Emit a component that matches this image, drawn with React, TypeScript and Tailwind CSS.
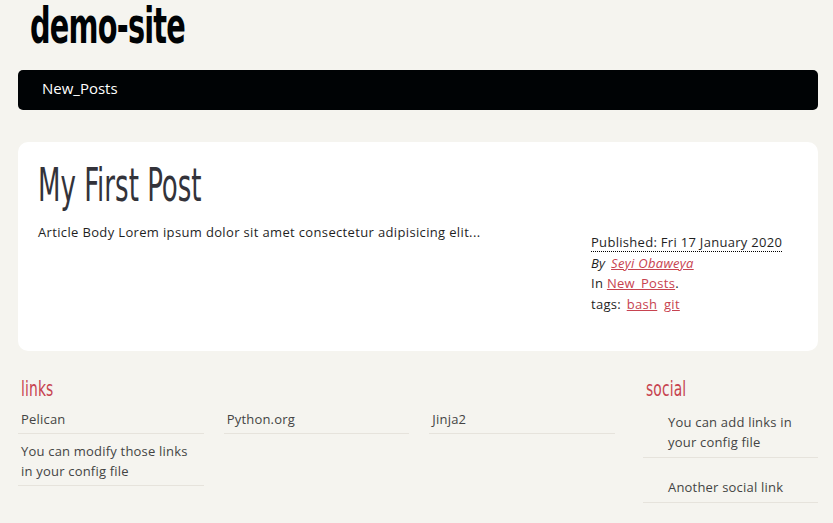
import React from "react"

const head = { fontFamily: '"Liberation Sans Narrow", "DejaVu Sans Condensed", "Liberation Sans", sans-serif' }
const body = { fontFamily: '"Open Sans", "DejaVu Sans", sans-serif' }

const links = [
    { label: "Pelican" },
    { label: "Python.org" },
    { label: "Jinja2" },
    { label: "You can modify those links in your config file" },
]

const social = ["You can add links in your config file", "Another social link"]

export default function App() {
    return (
        <div className="min-h-[523px] bg-[#f5f4ef] text-[#1f1f1f]" style={body}>
            <div className="ml-[18px] w-[800px]">
                <header className="pl-[12px] pt-[1px] h-[70px]">
                    <h1 className="text-[50px] font-bold leading-[50px] text-[#000305]" style={head}>
                        <span className="inline-block origin-left scale-x-[0.64] tracking-tight">demo-site</span>
                    </h1>
                </header>

                <nav className="h-[40px] rounded-[5px] bg-[#000305] flex items-center pl-[24px] pb-[4px]">
                    <a href="#" className="text-[15px] text-white">
                        New_Posts
                    </a>
                </nav>

                <article className="mt-[32px] h-[209px] rounded-[10px] bg-white px-[20px] pt-[18px]">
                    <h2 className="text-[46px] leading-[50px] text-[#33333a]" style={head}>
                        <span className="inline-block origin-left scale-x-[0.63]">My First Post</span>
                    </h2>
                    <div className="flex mt-[9px]">
                        <p className="flex-1 text-[13px] leading-[20px] pt-[3px] tracking-[0.35px]">
                            Article Body Lorem ipsum dolor sit amet consectetur adipisicing elit...
                        </p>
                        <div className="w-[207px] pt-[13px] text-[13px] leading-[20.5px] tracking-[0.3px]">
                            <abbr className="no-underline border-b border-dotted border-black">
                                Published: Fri 17 January 2020
                            </abbr>
                            <div className="italic">
                                By{" "}
                                <a href="#" className="ml-[2px] text-[#c74350] underline">
                                    Seyi Obaweya
                                </a>
                            </div>
                            <div>
                                In{" "}
                                <a href="#" className="text-[#c74350] underline">
                                    New_Posts
                                </a>
                                .
                            </div>
                            <div>
                                tags:{" "}
                                <a href="#" className="ml-[2px] mr-[3px] text-[#c74350] underline">
                                    bash
                                </a>{" "}
                                <a href="#" className="text-[#c74350] underline">
                                    git
                                </a>
                            </div>
                        </div>
                    </div>
                </article>

                <footer className="mt-[25px] flex text-[13px] leading-[20px] text-[#444] tracking-[0.2px]">
                    <div className="w-[597px]">
                        <h3 className="h-[26px] text-[22px] leading-[26px] text-[#c74350] pl-[3px]" style={head}>
                            <span className="inline-block origin-left scale-x-[0.7]">links</span>
                        </h3>
                        <ul className="grid grid-cols-3 gap-x-[20px]">
                            {links.map((l) => (
                                <li key={l.label} className="border-b border-[#e6e3dc] pl-[3px] pt-[7px] pb-[4px] pr-[10px]">
                                    <a href="#">{l.label}</a>
                                </li>
                            ))}
                        </ul>
                    </div>
                    <div className="ml-[28px] flex-1">
                        <h3 className="h-[26px] text-[22px] leading-[26px] text-[#c74350] pl-[3px]" style={head}>
                            <span className="inline-block origin-left scale-x-[0.7]">social</span>
                        </h3>
                        <ul>
                            {social.map((s) => (
                                <li key={s} className="border-b border-[#e6e3dc] pl-[25px] pr-[20px] pt-[10px] pb-[5px] mb-[9px]">
                                    <a href="#">{s}</a>
                                </li>
                            ))}
                        </ul>
                    </div>
                </footer>
            </div>
        </div>
    )
}
